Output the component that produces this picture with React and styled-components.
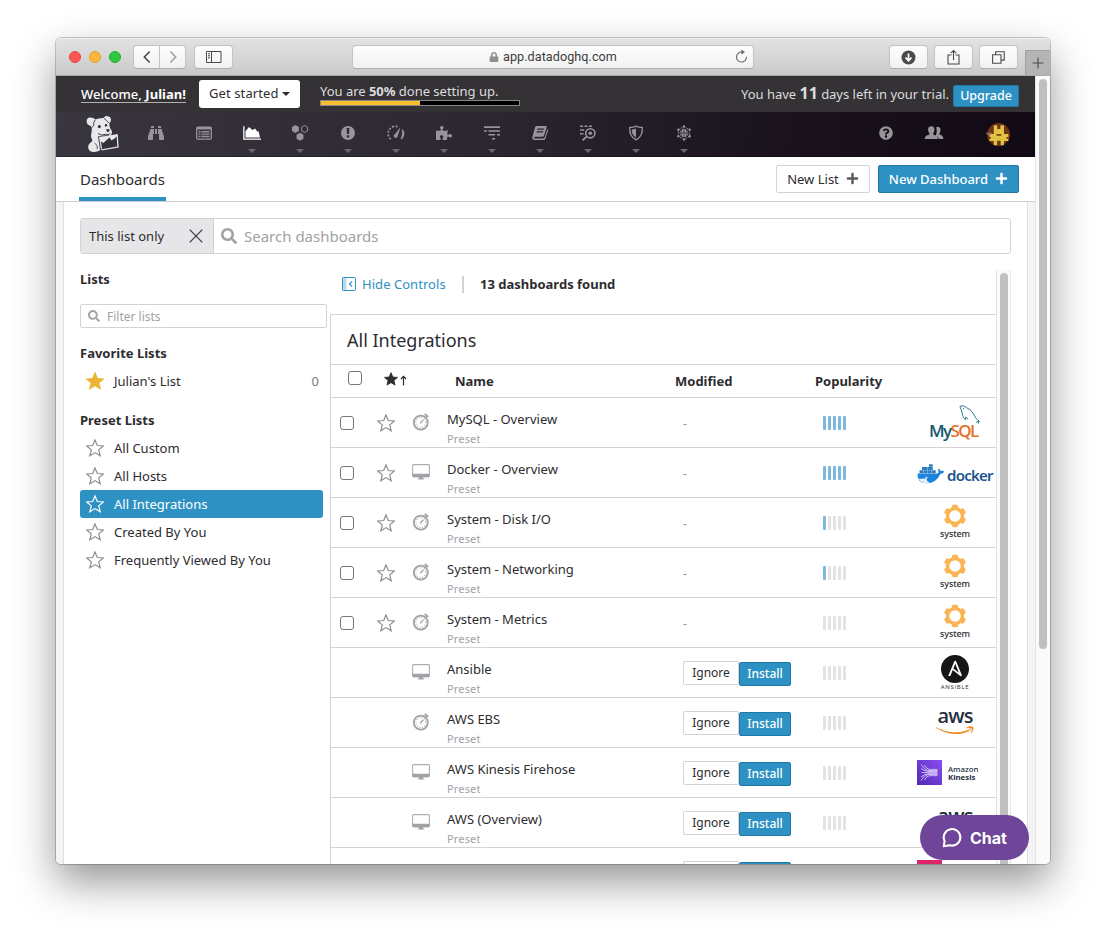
import React from 'react';
import styled, { createGlobalStyle } from 'styled-components';
import { FaBinoculars, FaPlus, FaSearch, FaPuzzlePiece, FaQuestionCircle, FaLock } from 'react-icons/fa';
import { SiAnsible } from 'react-icons/si';

const Global = createGlobalStyle`
  *, *::before, *::after { box-sizing: border-box; }
  html, body { margin: 0; height: 100%; background: #fff; overflow: hidden; }
  body { font-family: "Noto Sans", "Open Sans", sans-serif; font-size: 13px; color: #2d2c2f; }
  svg { display: block; flex: none; }
`;

const Desktop = styled.div`
  width: 1106px;
  height: 938px;
  padding: 38px 56px 0;
  overflow: hidden;
`;

const Window = styled.div`
  position: relative;
  display: flex;
  flex-direction: column;
  width: 994px;
  height: 826px;
  border-radius: 5px;
  box-shadow: 0 0 0 1px rgba(0, 0, 0, 0.2), 0 18px 42px rgba(0, 0, 0, 0.42);
`;

const WindowClip = styled.div`
  display: flex;
  flex-direction: column;
  height: 100%;
  border-radius: 5px;
  overflow: hidden;
  background: #fff;
`;

/* Browser toolbar */

const Toolbar = styled.div`
  display: flex;
  align-items: center;
  flex: none;
  height: 38px;
  padding-left: 13px;
  background: linear-gradient(#e3e2e3, #cbcacb);
  border-top: 1px solid #efefef;
  border-bottom: 1px solid #a8a7a8;
`;

const Lights = styled.div`
  display: flex;
  gap: 8px;
  margin-right: 12px;
`;

const Light = styled.span`
  width: 12px;
  height: 12px;
  border-radius: 50%;
  background: ${(p) => p.$fill};
  border: 1px solid ${(p) => p.$edge};
`;

const ToolButton = styled.div`
  display: flex;
  align-items: center;
  justify-content: center;
  width: ${(p) => p.$w || 39}px;
  height: 24px;
  background: linear-gradient(#fdfdfd, #f1f1f1);
  border: 1px solid #c4c3c4;
  border-bottom-color: #acabac;
  border-radius: ${(p) => p.$radius || '4px'};
  margin-left: ${(p) => p.$gap || 0}px;
  color: #4a4a4a;
`;

const Address = styled(ToolButton)`
  position: relative;
  width: 402px;
  margin-left: 119px;
  margin-right: 135px;
  gap: 4px;
  font: 400 12.6px/22px Roboto, "Liberation Sans", sans-serif;
  letter-spacing: 0.06px;
  color: #3c3c3c;
`;

const Reload = styled.span`
  position: absolute;
  right: 4px;
  top: 3px;
`;

const NewTab = styled.div`
  display: flex;
  align-items: center;
  justify-content: center;
  align-self: flex-end;
  width: 25px;
  height: 25px;
  margin-left: 7px;
  background: #b5b4b5;
  border: 1px solid #a1a0a1;
  border-width: 1px 0 0 1px;
`;

/* Page frame */

const Viewport = styled.div`
  display: flex;
  flex: 1;
  min-height: 0;
`;

const Page = styled.div`
  display: flex;
  flex-direction: column;
  width: 979px;
`;

const Track = styled.div`
  width: 15px;
  padding: ${(p) => p.$pad};
  background: #fafafa;
  border-left: 1px solid #e5e5e5;
  border-right: ${(p) => (p.$inner ? '1px solid #e8e8e8' : '0')};
`;

const Thumb = styled.div`
  width: 8px;
  height: ${(p) => p.$h};
  border-radius: 4px;
  background: #c1c0c1;
`;

const Banner = styled.div`
  display: flex;
  flex: none;
  height: 36px;
  padding: 0 16px 0 25px;
  background: #343235;
  color: #dddcdf;
  letter-spacing: -0.02px;
`;

const Welcome = styled.div`
  align-self: flex-start;
  height: 18px;
  margin-top: 9px;
  width: 105px;
  white-space: nowrap;
  border-bottom: 1px solid #b0afb1;
  line-height: 18px;
  font-weight: 500;
  letter-spacing: 0.04px;
  color: #fff;
`;

const GetStarted = styled.div`
  display: flex;
  align-items: center;
  gap: 3px;
  width: 101px;
  height: 28px;
  margin: 4px 20px 0 13px;
  padding: 0 0 2px 10px;
  background: #fff;
  border-radius: 3px;
  color: #2d2c2f;
  letter-spacing: 0.1px;
`;

const Setup = styled.div`
  width: 200px;
  padding-top: 6px;
  line-height: 18px;
  white-space: nowrap;
`;

const Progress = styled.div`
  height: 6px;
  background: #000;
  border: 1px solid #89888b;
`;

const ProgressFill = styled.div`
  width: ${(p) => p.$value}%;
  height: 4px;
  background: #fdbd2c;
`;

const Trial = styled.div`
  margin-left: auto;
  line-height: 35px;
  white-space: nowrap;
  b { font-size: 16px; }
`;

const Upgrade = styled.div`
  width: 66px;
  height: 22px;
  margin: 9px 0 0 4px;
  background: #2d91c3;
  border: 1px solid #1f78a5;
  border-radius: 2px;
  color: #fff;
  font-weight: 500;
  font-size: 12.5px;
  line-height: 19px;
  text-align: center;
`;

const Nav = styled.div`
  display: flex;
  flex: none;
  height: 45px;
  padding-left: 30px;
  background: linear-gradient(97deg, #3a3640 0%, #2b2630 45%, #1b141f 72%, #110914 100%);
  border-bottom: 1px solid rgba(0, 0, 0, 0.25);
`;

const Dog = styled.div`
  width: 34px;
  margin-right: 12px;
  padding-top: 4px;
`;

const NavItem = styled.div`
  display: flex;
  flex-direction: column;
  align-items: center;
  width: 48px;
  padding-top: 11px;
  gap: 6px;
  color: ${(p) => (p.$active ? '#fff' : '#97949a')};
`;

const NavEnd = styled.div`
  display: flex;
  margin-left: auto;
`;

const Caret = styled.span`
  width: 0;
  border: 4px solid transparent;
  border-top-color: ${(p) => p.$color || '#6a6670'};
  border-bottom: 0;
  margin-top: ${(p) => p.$top || 0}px;
`;

const Avatar = styled.div`
  width: 77px;
  padding: 11px 0 0 27px;
`;

const Header = styled.div`
  display: flex;
  flex: none;
  height: 45px;
  padding: 0 16px 0 23px;
  background: #fff;
  border-bottom: 1px solid #cdccd0;
`;

const Tab = styled.div`
  width: 87px;
  height: 44px;
  padding-left: 1px;
  border-bottom: 4px solid #2d91c3;
  font-size: 15px;
  line-height: 44px;
  white-space: nowrap;
`;

const Button = styled.div`
  display: flex;
  align-items: center;
  justify-content: center;
  gap: 7px;
  width: ${(p) => p.$w}px;
  height: ${(p) => p.$h || 24}px;
  margin-top: ${(p) => p.$top || 0}px;
  margin-left: ${(p) => p.$left || 0}px;
  padding-bottom: 1px;
  border-radius: 2px;
  border: 1px solid ${(p) => (p.$primary ? '#1f78a5' : '#d3d2d6')};
  background: ${(p) => (p.$primary ? '#2d91c3' : '#fff')};
  color: ${(p) => (p.$primary ? '#fff' : '#2d2c2f')};
  font-size: ${(p) => p.$size || 13}px;
  font-weight: ${(p) => (p.$primary ? 500 : 400)};
  white-space: nowrap;
  svg { color: ${(p) => (p.$primary ? '#fff' : '#5b595e')}; }
`;

const Body = styled.div`
  display: flex;
  flex-direction: column;
  flex: 1;
  min-height: 0;
  padding: 16px 16px 0;
  border: solid #f4f3f6;
  border-width: 0 7px 0 7px;
  box-shadow: inset 1px 0 #e0dfe3, inset -1px 0 #e0dfe3;
`;

const SearchBar = styled.div`
  display: flex;
  flex: none;
  width: 931px;
  height: 36px;
  margin-left: 1px;
  border: 1px solid #d3d2d6;
  border-radius: 3px;
`;

const Scope = styled.div`
  display: flex;
  align-items: center;
  justify-content: space-between;
  width: 133px;
  padding: 0 10px 0 8px;
  background: #e6e6e8;
  border-right: 1px solid #d0cfd3;
`;

const SearchInput = styled.div`
  display: flex;
  align-items: center;
  gap: 7px;
  padding-left: 7px;
  color: #a3a1a6;
  font-size: 15px;
`;

const Columns = styled.div`
  display: flex;
  flex: 1;
  min-height: 0;
  margin: 16px 0 0 1px;
`;

/* Sidebar */

const Sidebar = styled.div`
  width: 250px;
  flex: none;
`;

const ListHeading = styled.div`
  margin-bottom: ${(p) => p.$gap || 0}px;
  line-height: 18px;
  font-weight: 700;
  font-size: 13px;
`;

const Filter = styled.div`
  display: flex;
  align-items: center;
  gap: 7px;
  width: 247px;
  height: 24px;
  margin: 16px 0;
  padding-left: 7px;
  border: 1px solid #d3d2d6;
  border-radius: 2px;
  font-size: 12px;
  color: #a3a1a6;
`;

const ListItem = styled.div`
  display: flex;
  align-items: center;
  gap: 10px;
  width: 243px;
  height: 28px;
  margin-bottom: ${(p) => p.$gap || 0}px;
  padding: 0 4px 0 6px;
  border-radius: 3px;
  background: ${(p) => (p.$selected ? '#2d91c3' : 'transparent')};
  color: ${(p) => (p.$selected ? '#fff' : '#2d2c2f')};
`;

const Count = styled.span`
  margin-left: auto;
  color: #7d7b80;
`;

/* Results */

const Results = styled.div`
  display: flex;
  flex-direction: column;
  width: 666px;
  overflow: hidden;
`;

const Controls = styled.div`
  display: flex;
  align-items: center;
  flex: none;
  height: 28px;
  margin-bottom: 16px;
  padding-left: 12px;
`;

const Toggle = styled.div`
  display: flex;
  align-items: center;
  gap: 6px;
  width: 120px;
  color: #2d91c3;
  letter-spacing: 0.05px;
  white-space: nowrap;
`;

const Found = styled.div`
  height: 17px;
  padding-left: 16px;
  border-left: 2px solid #d3d2d6;
  font-weight: 700;
  line-height: 17px;
`;

const Panel = styled.div`
  flex: 1;
  border: solid #d3d2d6;
  border-width: 1px 0 0 1px;
  border-top-left-radius: 2px;
`;

const PanelTitle = styled.div`
  height: 50px;
  padding-left: 16px;
  border-bottom: 1px solid #d3d2d6;
  font-size: 18px;
  line-height: 51px;
`;

const HeadRow = styled.div`
  display: grid;
  grid-template-columns: 53px 71px 220px 140px 1fr;
  height: 33px;
  border-bottom: 1px solid #d3d2d6;
  font-weight: 700;
  line-height: 33px;
`;

const HeadMark = styled.div`
  display: flex;
  align-items: flex-start;
  gap: 2px;
  padding: ${(p) => p.$pad};
`;

const Row = styled.div`
  display: grid;
  grid-template-columns: 46px 35px 35px 236px 140px 91px 82px;
  height: 50px;
  border-bottom: 1px solid #d3d2d6;
`;

const Cell = styled.div`
  padding: ${(p) => p.$pad || 0};
`;

const Check = styled.span`
  display: block;
  width: 14px;
  height: 14px;
  border: 1px solid #77757b;
  border-radius: 3px;
  background: #fff;
`;

const Name = styled.div`
  padding-top: 11px;
  line-height: 20px;
`;

const Kind = styled.div`
  padding-top: 1px;
  font-size: 11px;
  line-height: 18px;
  letter-spacing: 0.15px;
  color: #a3a1a6;
`;

const Dash = styled.div`
  padding-top: 17px;
  line-height: 18px;
  font-size: 12px;
  color: #918f94;
`;

const Actions = styled.div`
  display: flex;
  padding-top: 13px;
`;

const Bars = styled.div`
  display: flex;
  gap: 2px;
  padding-top: 18px;
`;

const Bar = styled.span`
  width: 3px;
  height: 14px;
  border-radius: 1px;
  background: ${(p) => (p.$on ? '#7cb9dc' : '#e3e2e5')};
`;

const LogoCell = styled.div`
  display: flex;
  flex-direction: column;
  align-items: center;
  padding-top: ${(p) => p.$top}px;
  white-space: nowrap;
`;

const MySqlArt = styled.div`
  align-self: flex-start;
  margin-left: 45px;
`;

const MySqlWord = styled.div`
  width: 52px;
  margin-top: -4px;
  font: 600 17px/20px "Open Sans", sans-serif;
  letter-spacing: -1.6px;
  color: #15586f;
  i { font-style: normal; color: #e8702a; }
`;

const DockerMark = styled.div`
  display: flex;
  align-items: center;
  align-self: flex-start;
  gap: 2px;
  margin-left: 3px;
  span { margin-top: 3px; font: 600 15px/20px "Noto Sans", sans-serif; letter-spacing: -0.75px; color: #1b5590; }
`;

const Caption = styled.div`
  font: ${(p) => p.$font};
  letter-spacing: ${(p) => p.$track || 0}px;
  color: #2d2c2f;
`;

const AwsWord = styled.div`
  height: 17px;
  font: 600 20px/14px "Open Sans", sans-serif;
  letter-spacing: -0.8px;
  color: #252f3e;
`;

const Kinesis = styled.div`
  display: flex;
  align-items: center;
  align-self: flex-start;
  gap: 6px;
  margin-left: 3px;
  font: 500 7.8px/8px "Noto Sans", sans-serif;
  color: #232f3e;
`;

const PinkTile = styled.div`
  align-self: flex-start;
  width: 25px;
  height: 25px;
  margin-left: 3px;
  background: #e0246c;
`;

const Chat = styled.div`
  position: absolute;
  left: 864px;
  top: 777px;
  display: flex;
  align-items: center;
  gap: 7px;
  width: 109px;
  height: 45px;
  padding-left: 22px;
  border-radius: 23px;
  background: #6e4599;
  color: #fff;
  font: 700 16px/20px Inter, Roboto, sans-serif;
`;

const starPoints = '9,0.9 11.3,6.5 17.3,7 12.7,10.9 14.2,16.8 9,13.6 3.8,16.8 5.3,10.9 0.7,7 6.7,6.5';

const Star = ({ fill = 'none', color = '#8d8b90', size = 18 }) => (
  <svg width={size} height={size} viewBox="0 0 18 18">
    <polygon points={starPoints} fill={fill} stroke={color} strokeWidth="1.2" strokeLinejoin="miter" />
  </svg>
);

const Clock = () => (
  <svg width="18" height="18" viewBox="0 0 18 18" fill="none" stroke="#a3a1a6">
    <circle cx="8.8" cy="9.6" r="7" strokeWidth="1.8" />
    <circle cx="8.8" cy="9.6" r="5" strokeWidth="1.1" strokeDasharray="0.9 1.72" />
    <path d="M8.2 10.3L11.5 6.6" strokeWidth="1.4" />
    <path d="M12.7 0.9L16.3 3.9M13.8 3.7L15 2.4" strokeWidth="1.8" />
  </svg>
);

const Screen = () => (
  <svg width="18" height="18" viewBox="0 0 18 18">
    <rect x="0.6" y="1.6" width="16.8" height="12" rx="1" fill="#fff" stroke="#b0aeb3" strokeWidth="1.1" />
    <path d="M0.5 10.8h17v2.4q0 1-1 1h-15q-1 0-1-1z" fill="#a3a1a6" />
    <path d="M7 14h4v1.4h1.2v1H5.8v-1H7z" fill="#a3a1a6" />
  </svg>
);

const DogMark = () => (
  <svg width="33" height="37" viewBox="0 0 33 37">
    <g fill="#e8e7ea">
      <path d="M.6 4.500Q1 1.800 4 1.400Q7.500 1.300 9.300 3.600Q13 1.800 17.600 2Q18.500.200 20.700.100Q24.500.600 25 3.500Q25 6.300 23.300 7.200Q23.200 10 24.300 12.500Q26.300 14.800 26 17.200Q25 20 21.500 20.300L14 21.800L15.500 33.500Q12 35.600 8.500 36Q3.500 36.200 2.300 32.500Q1.500 28.500 5 26.300Q7.300 24.500 5.600 22.500Q4.300 20.500 5.300 17.800Q6 15.500 5.800 12.500Q5.600 10.900 4.800 10Q.500 9 .6 4.500z" />
      <path d="M13.200 21.300L31.700 18L32.700 31.500L15.700 34.600z" />
    </g>
    <g fill="none" stroke="#35313b">
      <path d="M9.300 3.800Q7.200 6.200 7.600 9.500L6 11.500" strokeWidth=".9" />
      <path d="M18 2.300Q20.200 4 22.800 7" strokeWidth=".9" />
      <path d="M12 17.500Q16 20.300 19.500 18.300Q22.500 19.500 24.300 17.500" strokeWidth=".9" />
      <path d="M12.400 20.300L14.700 35" strokeWidth=".9" />
      <path d="M8.500 27Q12.300 29 11.300 33" strokeWidth=".8" />
      <path d="M12.600 20.600L23 19" strokeWidth=".8" />
    </g>
    <g fill="#35313b">
      <ellipse cx="13.300" cy="10.600" rx="1.500" ry="1.700" />
      <ellipse cx="20" cy="9.300" rx="1.200" ry="1.400" />
      <path d="M20 13.600Q22 12.500 23.700 13.500Q23.700 15.700 21.800 16.200Q20.200 15.400 20 13.600z" />
      <path d="M15 25.500L17.500 27L20 24.500L23.500 21.500L25.500 24.500L28.500 22.500L30.700 20.500L31.300 30.400L16.200 33.200z" />
    </g>
  </svg>
);

const Icon = ({ children, w = 20, h = 20 }) => (
  <svg width={w} height={h} viewBox="0 0 20 20" fill="currentColor">{children}</svg>
);

const hex = (x, y, r) =>
  [0, 1, 2, 3, 4, 5].map((i) => `${x + r * Math.sin((i * Math.PI) / 3)},${y - r * Math.cos((i * Math.PI) / 3)}`).join(' ');

const PaddedIcon = styled.span`
  display: flex;
  align-items: center;
  justify-content: center;
  width: 20px;
  height: 20px;
`;

const navIcons = [
  { id: 'watch', icon: <PaddedIcon><FaBinoculars size={16} /></PaddedIcon> },
  {
    id: 'events',
    icon: (
      <Icon>
        <rect x="2.700" y="4.200" width="14.600" height="12" rx="1.200" fill="none" stroke="currentColor" strokeWidth="1.300" />
        <path d="M3 4h14v2.600H3zM4.500 8h2v1.400h-2zM7.300 8h8.200v1.400H7.300zM4.500 10.400h2v1.400h-2zM7.300 10.400h8.200v1.400H7.300zM4.500 12.800h2v1.400h-2zM7.300 12.800h8.200v1.400H7.300z" />
      </Icon>
    ),
  },
  {
    id: 'dashboards',
    active: true,
    caret: true,
    icon: (
      <Icon>
        <path d="M1.200 3.200h1.300v12.300H19v1.300H1.200z" />
        <path d="M3.500 14.600V8.200L7 4.100l3.500 3 2.600-1.500 2.300 3.200 1.200-.5 1.400 6.300z" />
      </Icon>
    ),
  },
  {
    id: 'hosts',
    caret: true,
    icon: (
      <Icon>
        <polygon points={hex(5.4, 6, 4)} />
        <polygon points={hex(14.6, 6, 3.5)} fill="none" stroke="currentColor" strokeWidth="1" />
        <polygon points={hex(10, 13.8, 4)} />
      </Icon>
    ),
  },
  {
    id: 'monitors',
    caret: true,
    icon: (
      <Icon>
        <path fillRule="evenodd" d="M10 3a7 7 0 1 0 0 14a7 7 0 1 0 0-14zM8.600 5h2.800l-.4 6H9zM8.800 12.200h2.400v2.400H8.800z" />
      </Icon>
    ),
  },
  {
    id: 'metrics',
    caret: true,
    icon: (
      <Icon>
        <path d="M4.800 16.200A7.300 7.300 0 0 1 12.600 4" fill="none" stroke="currentColor" strokeWidth="1.700" strokeDasharray="2 1.500" />
        <path d="M16.600 6.200q3.800 4.800-.4 10l-1.600-.5q2.400-4.600 1.100-9.200zM14.600 4L11.800 12.800a2 2 0 1 1-2.700-1.800z" />
      </Icon>
    ),
  },
  { id: 'integrations', caret: true, icon: <PaddedIcon><FaPuzzlePiece size={16} /></PaddedIcon> },
  {
    id: 'apm',
    caret: true,
    icon: (
      <Icon>
        <path d="M2 3.200h16v1.700H2zM2 7.200h3v1.500H2zM6.500 7.200h11.500v1.500H6.500zM6.500 11h6.500v1.500H6.500zM15 11h3v1.500h-3zM10 14.900h3v1.500h-3z" />
      </Icon>
    ),
  },
  {
    id: 'notebooks',
    caret: true,
    icon: (
      <Icon>
        <path fillRule="evenodd" d="M6.800 3H15.500q1.500 0 1.100 1.400L14 12.600q-.400 1.200-1.600 1.200H4.600q-1 .800-.100 1.600h8.700q1.100 0 1.500-1.100L17.400 6q.900.500.600 1.600L15.300 15.700q-.500 1.400-1.900 1.400H4.100q-2.400-.6-1.700-3L5 4.400Q5.500 3 6.800 3zM7.600 5.600l-.4 1.100h6.500l.4-1.100zM6.800 8.300l-.4 1.100h6.500l.4-1.100z" />
      </Icon>
    ),
  },
  {
    id: 'logs',
    caret: true,
    icon: (
      <Icon>
        <path d="M2 2.400h3v1.500H2zM6.500 2.400h3v1.500h-3zM11 2.400h3v1.500h-3zM2 6.200h4.200v1.500H2zM2 10h3.500v1.500H2z" />
        <circle cx="12.300" cy="10.300" r="4.600" fill="none" stroke="currentColor" strokeWidth="1.600" />
        <circle cx="12.300" cy="10.300" r="1.800" />
        <path d="M8.800 13.400L4.600 17.400" stroke="currentColor" strokeWidth="2" />
      </Icon>
    ),
  },
  {
    id: 'security',
    caret: true,
    icon: (
      <Icon>
        <path d="M10 3.200q3 1.500 6.300 1.200Q17 13.500 10 16.800Q3 13.500 3.700 4.400Q7 4.700 10 3.200z" fill="none" stroke="currentColor" strokeWidth="1.300" />
        <path d="M10 5.400v9.200Q5.400 12 5.700 6.500Q8 6.400 10 5.400z" />
      </Icon>
    ),
  },
  {
    id: 'synthetics',
    caret: true,
    icon: (
      <Icon>
        <circle cx="10" cy="10" r="4.300" />
        <path d="M5.700 10h8.600M10 5.700v8.600M7.600 6.300q-1.500 3.700 0 7.400M12.400 6.300q1.500 3.700 0 7.400" stroke="#29232f" strokeWidth=".7" fill="none" />
        <polygon points={hex(10, 10, 6.5)} fill="none" stroke="currentColor" strokeWidth="1" strokeDasharray="1.800 1.400" />
        {[0, 1, 2, 3, 4, 5].map((i) => (
          <circle key={i} cx={10 + 6.5 * Math.sin((i * Math.PI) / 3)} cy={10 - 6.5 * Math.cos((i * Math.PI) / 3)} r="1.200" />
        ))}
      </Icon>
    ),
  },
];

const People = () => (
  <Icon>
    <path d="M12.200 4.300q1.200-.8 2.600-.4q2.200.8 1.700 3.600q-.2 1.800-1.100 2.900v1.200q3.800.9 4 4.400h-4.300q-.8-2.400-3.500-3.300q1.900-3.400.6-8.400z" />
    <path d="M7.200 3.200q3.500.2 3.200 4q-.2 1.900-1.200 3v1.400q4.600 1 4.800 4.400H.700q.200-3.400 4.700-4.400v-1.400Q4.300 9 4.100 7.200q-.200-3.800 3.100-4z" />
  </Icon>
);

const AvatarArt = () => (
  <svg width="25" height="23" viewBox="-2 0 24 22">
    <circle cx="11" cy="11" r="11" fill="#6e3317" />
    <path d="M6.400 2.200h3.400v3.600h3V2.200h3.400v8.200h4.200v6.800h-4.200v4h-3.400v-4h-3v4H6.400v-4H2.200v-6.800h4.200z" fill="#dfc341" />
    <path d="M9 10.800h4.600v1.300H9zM2 13.400h1.600v1.600H2zM18.600 13.400h2v1.600h-2zM9.800 17h3v4.600h-3z" fill="#6e3317" />
    <path d="M-1.500 9.300h6.500l-3.200 2.800z" fill="#8a7070" />
  </svg>
);

const Dolphin = () => (
  <svg width="22" height="20" viewBox="0 0 22 20" fill="none" stroke="#2c7a8c" strokeWidth="1">
    <path d="M1 1.200Q4.500-.3 7.300 2.500Q12.500 4.500 14.800 9.500Q16.200 13.500 20.200 16.200L17 17.200M20.200 16.200L19 18.800M1 1.200Q1.200 3 2.200 4.500Q3 6.800 3.500 9.800Q4.200 13 6.500 14.800L6.800 12Q8 12.800 8.800 14.200" />
    <circle cx="4.500" cy="3.600" r=".3" />
  </svg>
);

const Whale = () => (
  <svg width="28" height="20" viewBox="0 0 28 20">
    <path d="M.5 9.500H19.500Q21.300 9.500 21.700 8.300Q20.300 6.300 21.700 4.500Q23.300 5.500 23.600 7Q25.700 6.400 27.300 7.500Q26.300 9.900 23.300 10Q19.300 19.300 9.500 19.300Q.2 19.300.5 9.500z" fill="#1a84df" />
    <path d="M2.500 6.200h4.200v3H2.500zM7 6.200h3.700v3H7zM11 6.200h3.700v3H11zM15 6.200h3.700v3H15zM5 3h5.700v3H5zM11 3h4.700v3H11zM12 .2h3.700v2.600H12z" fill="#2c7dbf" />
    <path d="M1.500 14.500Q5.500 15 9.300 14.300Q9.500 17.300 12.500 18.900Q4.500 20.300 1.500 14.500z" fill="#e6eff8" />
    <circle cx="9.500" cy="13.700" r=".9" fill="#fff" />
  </svg>
);

const Gear = () => (
  <svg width="24" height="24" viewBox="0 0 24 24">
    {[0, 60, 120, 180, 240, 300].map((a) => (
      <rect key={a} x="9" y="0.800" width="6" height="6" rx="1.400" fill="#fbb454" transform={`rotate(${a} 12 12)`} />
    ))}
    <circle cx="12" cy="12" r="7.500" fill="#fff" stroke="#fbb454" strokeWidth="3.500" />
  </svg>
);

const Smile = () => (
  <svg width="38" height="10" viewBox="0 0 38 10">
    <path d="M.3 1.200Q16 10.200 34 3.400q1.300-.2.700.8Q18 13 .2 2Q-.2 1.300.300 1.200z" fill="#f58a25" />
    <path d="M30.500 1.700q3.700-1.900 6.600-.7q.8 2.800-1.900 6q1-2.600.9-4.500q-2.600-.5-5.600-.8z" fill="#f58a25" stroke="#f58a25" strokeWidth=".5" />
  </svg>
);

const KinesisTile = () => (
  <svg width="25" height="25" viewBox="0 0 25 25">
    <defs>
      <linearGradient id="kinesis" x1="0" y1="1" x2="1" y2="0">
        <stop offset="0" stopColor="#5129b8" />
        <stop offset="1" stopColor="#8a4df0" />
      </linearGradient>
    </defs>
    <rect width="25" height="25" fill="url(#kinesis)" />
    <path
      d="M4 4.500q3.500 5.500 7 6h9.500M7.500 5q2 4.200 5 4.400h8M4 8.500q4 3 8 3h8.500M4.500 12.600h16M4 17q4-3.300 8-3.300h8.500M7.500 20q2-4.300 5-4.300h8M4 20.500q3.500-5.700 7-6h9.500"
      fill="none"
      stroke="#e2d4fb"
      strokeWidth=".8"
    />
  </svg>
);

const system = { top: 6, art: <><Gear /><Caption $font={'500 9px/11px "Noto Sans", sans-serif'} $track={-0.1}>system</Caption></> };
const aws = { top: 11, art: <><AwsWord>aws</AwsWord><Smile /></> };

const logos = {
  mysql: { top: 7, art: <><MySqlArt><Dolphin /></MySqlArt><MySqlWord>My<i>SQL</i></MySqlWord></> },
  docker: { top: 14, art: <DockerMark><Whale /><span>docker</span></DockerMark> },
  system,
  ansible: { top: 7, art: <><SiAnsible size={28} color="#161616" /><Caption $font={'500 6px/9px "Open Sans", sans-serif'} $track={0.7}>ANSIBLE</Caption></> },
  aws,
  kinesis: { top: 12, art: <Kinesis><KinesisTile /><span>Amazon<br /><b>Kinesis</b></span></Kinesis> },
  pink: { top: 12, art: <PinkTile /> },
};

const rows = [
  { name: 'MySQL - Overview', time: true, installed: true, pop: 5, logo: 'mysql' },
  { name: 'Docker - Overview', installed: true, pop: 5, logo: 'docker' },
  { name: 'System - Disk I/O', time: true, installed: true, pop: 1, logo: 'system' },
  { name: 'System - Networking', time: true, installed: true, pop: 1, logo: 'system' },
  { name: 'System - Metrics', time: true, installed: true, pop: 0, logo: 'system' },
  { name: 'Ansible', pop: 0, logo: 'ansible' },
  { name: 'AWS EBS', time: true, pop: 0, logo: 'aws' },
  { name: 'AWS Kinesis Firehose', pop: 0, logo: 'kinesis' },
  { name: 'AWS (Overview)', pop: 0, logo: 'aws' },
  { name: '', pop: 0, logo: 'pink' },
];

const presets = ['All Custom', 'All Hosts', 'All Integrations', 'Created By You', 'Frequently Viewed By You'];

function BrowserBar() {
  return (
    <Toolbar>
      <Lights>
        <Light $fill="#fc5753" $edge="#df4744" />
        <Light $fill="#fdb73e" $edge="#dfa02f" />
        <Light $fill="#2fc73f" $edge="#26a934" />
      </Lights>
      <ToolButton $w={27} $radius="4px 0 0 4px">
        <svg width="8" height="14" viewBox="0 0 8 14"><path d="M6.700 1.500L1.300 7l5.400 5.500" fill="none" stroke="#444" strokeWidth="1.500" /></svg>
      </ToolButton>
      <ToolButton $w={27} $gap={-1} $radius="0 4px 4px 0">
        <svg width="8" height="14" viewBox="0 0 8 14"><path d="M1.300 1.500L6.700 7l-5.400 5.500" fill="none" stroke="#9e9e9e" strokeWidth="1.500" /></svg>
      </ToolButton>
      <ToolButton $gap={8}>
        <svg width="16" height="12" viewBox="0 0 16 12" fill="none" stroke="#4a4a4a">
          <path d="M.5.500h14.500v11H.5zM5.500.500v11M2 2.800h2M2 4.800h2M2 6.800h2" />
        </svg>
      </ToolButton>
      <Address>
        <FaLock size={10} color="#8f8f8f" />
        app.datadoghq.com
        <Reload>
          <svg width="15" height="15" viewBox="0 0 15 15">
            <path d="M8.500 3.100A5 5 0 1 0 12.500 7.800" fill="none" stroke="#666" strokeWidth="1.100" />
            <path d="M7.400.600l3.600 2.600-3.600 2.400z" fill="#666" />
          </svg>
        </Reload>
      </Address>
      <ToolButton>
        <svg width="15" height="15" viewBox="0 0 15 15"><circle cx="7.500" cy="7.500" r="7" fill="#4a4a4a" /><path d="M7.500 3.500v7M4.500 7.700l3 3 3-3" fill="none" stroke="#fff" strokeWidth="1.700" /></svg>
      </ToolButton>
      <ToolButton $gap={6}>
        <svg width="13" height="17" viewBox="0 0 13 17" fill="none" stroke="#4a4a4a" strokeWidth="1.100"><path d="M4.500 6H1v9h11V6H8.500M6.500 11V1.500M3.800 4.200l2.700-2.700 2.700 2.700" /></svg>
      </ToolButton>
      <ToolButton $gap={6}>
        <svg width="13" height="13" viewBox="0 0 13 13" fill="none" stroke="#4a4a4a" strokeWidth="1.100"><path d="M.6 3.800h8.400v8.400H.6zM3.600 3.600V.700h8.600v8.400H9.200" /></svg>
      </ToolButton>
      <NewTab>
        <svg width="12" height="12" viewBox="0 0 12 12"><path d="M6 .5v11M.5 6h11" stroke="#4a4a4a" strokeWidth="1.100" /></svg>
      </NewTab>
    </Toolbar>
  );
}

function ResultRow({ row }) {
  const logo = logos[row.logo];
  return (
    <Row>
      <Cell $pad="18px 0 0 9px">{row.installed && <Check />}</Cell>
      <Cell $pad="16px 0 0">{row.installed && <Star />}</Cell>
      <Cell $pad="15px 0 0">{row.time ? <Clock /> : <Screen />}</Cell>
      <div>
        {row.name && <Name>{row.name}</Name>}
        {row.name && <Kind>Preset</Kind>}
      </div>
      {row.installed ? (
        <Dash>-</Dash>
      ) : (
        <Actions>
          <Button $w={56} $size={12}>Ignore</Button>
          <Button $w={52} $size={12} $top={1} $primary>Install</Button>
        </Actions>
      )}
      <Bars>{[0, 1, 2, 3, 4].map((i) => <Bar key={i} $on={i < row.pop} />)}</Bars>
      <LogoCell $top={logo.top}>{logo.art}</LogoCell>
    </Row>
  );
}

export default function App() {
  return (
    <Desktop>
      <Global />
      <Window>
        <WindowClip>
          <BrowserBar />
          <Viewport>
            <Page>
              <Banner>
                <Welcome>Welcome, <b>Julian!</b></Welcome>
                <GetStarted>Get started <Caret $color="#2d2c2f" $top={2} /></GetStarted>
                <Setup>
                  You are <b>50%</b> done setting up.
                  <Progress><ProgressFill $value={50} /></Progress>
                </Setup>
                <Trial>You have <b>11</b> days left in your trial.</Trial>
                <Upgrade>Upgrade</Upgrade>
              </Banner>
              <Nav>
                <Dog><DogMark /></Dog>
                {navIcons.map((n) => (
                  <NavItem key={n.id} $active={n.active}>
                    {n.icon}
                    {n.caret && <Caret />}
                  </NavItem>
                ))}
                <NavEnd>
                  <NavItem><PaddedIcon><FaQuestionCircle size={14} /></PaddedIcon></NavItem>
                  <NavItem><People /></NavItem>
                  <Avatar><AvatarArt /></Avatar>
                </NavEnd>
              </Nav>
              <Header>
                <Tab>Dashboards</Tab>
                <Button $w={94} $h={28} $top={8} $left={610}>New List <FaPlus size={13} /></Button>
                <Button $w={141} $h={28} $top={8} $left={8} $primary>New Dashboard <FaPlus size={13} /></Button>
              </Header>
              <Body>
                <SearchBar>
                  <Scope>
                    This list only
                    <svg width="14" height="14" viewBox="0 0 14 14"><path d="M.7.700l12.600 12.600M13.300.700L.7 13.300" stroke="#3a383c" strokeWidth="1.200" /></svg>
                  </Scope>
                  <SearchInput><FaSearch size={16} />Search dashboards</SearchInput>
                </SearchBar>
                <Columns>
                  <Sidebar>
                    <ListHeading>Lists</ListHeading>
                    <Filter><FaSearch size={12} />Filter lists</Filter>
                    <ListHeading $gap={5}>Favorite Lists</ListHeading>
                    <ListItem $gap={16}>
                      <Star fill="#ebb534" color="#ebb534" />Julian's List<Count>0</Count>
                    </ListItem>
                    <ListHeading $gap={5}>Preset Lists</ListHeading>
                    {presets.map((p) => {
                      const selected = p === 'All Integrations';
                      return (
                        <ListItem key={p} $selected={selected}>
                          <Star color={selected ? '#fff' : '#8d8b90'} />{p}
                        </ListItem>
                      );
                    })}
                  </Sidebar>
                  <Results>
                    <Controls>
                      <Toggle>
                        <svg width="14" height="14" viewBox="0 0 14 14" fill="none" stroke="#2d91c3">
                          <rect x=".5" y=".5" width="13" height="13" rx=".8" />
                          <rect x="1" y="1" width="3.300" height="12" fill="#b7d9ea" stroke="none" />
                          <path d="M10.200 4.300L7.500 7l2.700 2.700" strokeWidth="1.200" />
                        </svg>
                        Hide Controls
                      </Toggle>
                      <Found>13 dashboards found</Found>
                    </Controls>
                    <Panel>
                      <PanelTitle>All Integrations</PanelTitle>
                      <HeadRow>
                        <HeadMark $pad="6px 0 0 17px"><Check /></HeadMark>
                        <HeadMark $pad="7px 0 0">
                          <Star fill="#2d2c2f" color="#2d2c2f" size={14} />
                          <svg width="7" height="14" viewBox="0 -3 7 14"><path d="M3.500 10.500V1.500M.9 4l2.600-2.600L6.100 4" fill="none" stroke="#2d2c2f" strokeWidth="1.200" /></svg>
                        </HeadMark>
                        <span>Name</span>
                        <span>Modified</span>
                        <span>Popularity</span>
                      </HeadRow>
                      {rows.map((r, i) => <ResultRow key={i} row={r} />)}
                    </Panel>
                  </Results>
                  <Track $pad="3px 3px 0" $inner><Thumb $h="620px" /></Track>
                </Columns>
              </Body>
            </Page>
            <Track $pad="3px 3px 0"><Thumb $h="570px" /></Track>
          </Viewport>
        </WindowClip>
        <Chat>
          <svg width="21" height="21" viewBox="0 0 21 21"><path d="M1.800 19.200L2.600 14A8.300 8.300 0 1 1 7.500 18.200z" fill="none" stroke="#fff" strokeWidth="2.100" strokeLinejoin="round" /></svg>
          Chat
        </Chat>
      </Window>
    </Desktop>
  );
}
